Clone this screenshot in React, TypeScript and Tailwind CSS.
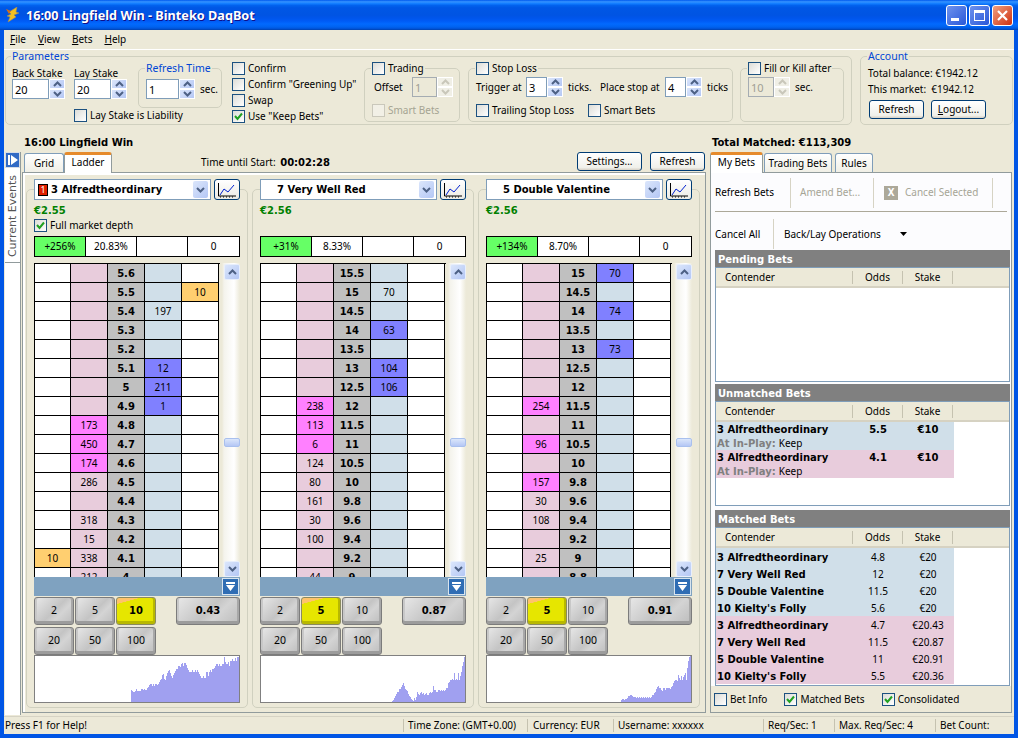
import React from "react";

type Row = { price: string; lay?: string; layHot?: boolean; back?: string; backHot?: boolean; left?: string; right?: string };

const FRAME_BLUE = "bg-[#0055e5]";
const BOLD = "font-['DejaVu_Sans'] font-bold text-[10px]";

const LADDER_A: Row[] = [
  { price: "5.6" },
  { price: "5.5", right: "10" },
  { price: "5.4", back: "197" },
  { price: "5.3" },
  { price: "5.2" },
  { price: "5.1", back: "12", backHot: true },
  { price: "5", back: "211", backHot: true },
  { price: "4.9", back: "1", backHot: true },
  { price: "4.8", lay: "173", layHot: true },
  { price: "4.7", lay: "450", layHot: true },
  { price: "4.6", lay: "174", layHot: true },
  { price: "4.5", lay: "286" },
  { price: "4.4" },
  { price: "4.3", lay: "318" },
  { price: "4.2", lay: "15" },
  { price: "4.1", lay: "338", left: "10" },
  { price: "4", lay: "212" },
];

const LADDER_B: Row[] = [
  { price: "15.5" },
  { price: "15", back: "70" },
  { price: "14.5" },
  { price: "14", back: "63", backHot: true },
  { price: "13.5" },
  { price: "13", back: "104", backHot: true },
  { price: "12.5", back: "106", backHot: true },
  { price: "12", lay: "238", layHot: true },
  { price: "11.5", lay: "113", layHot: true },
  { price: "11", lay: "6", layHot: true },
  { price: "10.5", lay: "124" },
  { price: "10", lay: "80" },
  { price: "9.8", lay: "161" },
  { price: "9.6", lay: "30" },
  { price: "9.4", lay: "100" },
  { price: "9.2" },
  { price: "9", lay: "44" },
];

const LADDER_C: Row[] = [
  { price: "15", back: "70", backHot: true },
  { price: "14.5" },
  { price: "14", back: "74", backHot: true },
  { price: "13.5" },
  { price: "13", back: "73", backHot: true },
  { price: "12.5" },
  { price: "12" },
  { price: "11.5", lay: "254", layHot: true },
  { price: "11" },
  { price: "10.5", lay: "96", layHot: true },
  { price: "10" },
  { price: "9.8", lay: "157", layHot: true },
  { price: "9.6", lay: "30" },
  { price: "9.4", lay: "108" },
  { price: "9.2" },
  { price: "9", lay: "25" },
  { price: "8.8" },
];

const CHART_A = [19,17,14,13,12,8,4,2,3,5,6,6,7,8,9,11,12,11,10,10,11,13,11,11,11,11,13,13,12,13,12,12,14,15,17,18,18,16,18,16,18,18,17,18,20,22,23,27,28,23,22,26,29,31,32,29,26,24,27,29,31,33,33,36,36,35,38,39,36,39,39,37,34,32,30,30,30,32,30,30,32,30,32,30,28,26,24,24,26,24,24,30,30,26,30,32,30,33,33,34,36,38,38,36,38,36,36,38,38,45,40,38,38,40,36,41,41,43,41,41,44,41,45,45].slice(-108);
const CHART_B = [1,2,4,6,8,10,10,13,13,15,17,19,16,13,12,11,8,6,5,3,2,1,4,2,5,10,8,7,9,10,8,9,7,8,9,7,7,9,10,9,10,16,12,12,10,10,12,12,11,12,11,12,11,12,14,14,19,20,22,22,23,22,29,22,23,22,29,22,26,30,36,40,45];
const CHART_C = [2,3,3,2,3,3,4,6,6,7,7,6,5,5,5,4,5,4,5,4,5,4,5,4,5,4,5,4,5,4,5,7,7,9,10,13,15,16,14,14,12,11,14,14,12,14,14,14,14,13,15,16,19,21,22,22,21,27,24,22,26,22,25,27,29,22,34,41,45,46];

function Arrow({ up, disabled }: { up?: boolean; disabled?: boolean }) {
  return (
    <svg width="9" height="6" viewBox="0 0 9 6" aria-hidden="true">
      <path d={up ? "M1 5L4.5 1.5 8 5" : "M1 1L4.5 4.5 8 1"} fill="none" stroke={disabled ? "#c9c7ba" : "#4d6185"} strokeWidth="2" />
    </svg>
  );
}

function Spin({ value, w, disabled }: { value: string; w: string; disabled?: boolean }) {
  const btn = disabled
    ? "h-[10px] flex items-center justify-center bg-[#f0efe6] border border-white"
    : "h-[10px] flex items-center justify-center bg-[linear-gradient(135deg,#dbe6fb,#b4c7f5)] border border-white";
  return (
    <div className="flex h-[20px]">
      <div className={`${w} h-[20px] flex items-center pl-[2px] text-[11px] border ${disabled ? "border-[#a5acb2] bg-[#ece9d8] text-[#a09f94]" : "border-[#7f9db9] bg-white"}`}>{value}</div>
      <div className="w-[16px]">
        <div className={btn}><Arrow up disabled={disabled} /></div>
        <div className={btn}><Arrow disabled={disabled} /></div>
      </div>
    </div>
  );
}

function Check({ checked, disabled, label }: { checked?: boolean; disabled?: boolean; label?: string }) {
  return (
    <div className={`flex items-center gap-[3px] whitespace-nowrap ${disabled ? "text-[#a5a493]" : ""}`}>
      <div className={`w-[13px] h-[13px] shrink-0 flex items-center justify-center border ${disabled ? "border-[#cac8bb] bg-[#f2f0e6]" : "border-[#1c5180] bg-[linear-gradient(135deg,#dcdcd7,#ffffff)]"}`}>
        {checked && (
          <svg width="9" height="9" viewBox="0 0 9 9" aria-hidden="true">
            <path d="M1 4L3.5 7 8 1.5" fill="none" stroke="#21a121" strokeWidth="2" />
          </svg>
        )}
      </div>
      {label}
    </div>
  );
}

function XpButton({ label, w }: { label: React.ReactNode; w: string }) {
  return (
    <div className={`${w} h-[19px] flex items-center justify-center rounded-[3px] border border-[#003c74] bg-[linear-gradient(180deg,#ffffff,#f0f0ea_85%,#d6d0c5)]`}>{label}</div>
  );
}

function Group({ legend, w, h, children }: { legend: React.ReactNode; w: string; h: string; children: React.ReactNode }) {
  return (
    <fieldset className={`${w} ${h} shrink-0 border border-[#d0d0bf] rounded-[5px]`}>
      <legend className="ml-[6px] px-[1px] h-[12px] leading-[12px] flex items-center">{legend}</legend>
      {children}
    </fieldset>
  );
}

function Blue({ children }: { children: React.ReactNode }) {
  return <span className="text-[#0046d5] text-[10.5px]">{children}</span>;
}

function MiniChart({ data }: { data: number[] }) {
  const start = 205 - data.length;
  const d = data.map((h, i) => `M${start + i} 46V${46 - h}h1V46z`).join("");
  return (
    <div className="h-[48px] border border-[#808080] bg-white">
      <svg width="204" height="46" viewBox="0 0 204 46" shapeRendering="crispEdges" aria-hidden="true">
        <path d={d} fill="#a0a0f0" transform="translate(-1 0)" />
      </svg>
    </div>
  );
}

function GreyButton({ label, w, on, bold }: { label: string; w: string; on?: boolean; bold?: boolean }) {
  const tone = on
    ? "bg-[linear-gradient(165deg,#ffc36b_0,#ffc36b_16%,#e6e600_17%)] shadow-[inset_0_-3px_0_#b8b800,inset_-2px_0_0_#b8b800] border-[#8a8a60]"
    : "bg-[linear-gradient(135deg,#e8e8e8,#c4c4c4_50%,#d4d4d4_65%,#bcbcbc)] shadow-[inset_0_-3px_0_#9c9c9c,inset_-2px_0_0_#a8a8a8,inset_2px_0_0_#c8c8c8] border-[#7c7c7c]";
  return (
    <div className={`${w} h-[28px] pb-[2px] flex items-center justify-center rounded-[3px] border ${tone} ${on || bold ? BOLD : "text-[10.5px]"}`}>{label}</div>
  );
}

function Combo({ name, badge }: { name: string; badge?: boolean }) {
  return (
    <div className="w-[177px] h-[21px] flex items-center pl-[3px] pr-[2px] border border-[#7f9db9] bg-white">
      <div className="w-[13px] shrink-0">
        {badge && <div className="w-[10px] h-[12px] bg-[#e02000] border border-black text-white text-[9px] leading-[10px] text-center">1</div>}
      </div>
      <span className={`flex-1 ${BOLD}`}>{name}</span>
      <div className="w-[15px] h-[17px] flex items-center justify-center bg-[linear-gradient(135deg,#dbe6fb,#b4c7f5)] rounded-[2px]"><Arrow /></div>
    </div>
  );
}

function ChartButton() {
  return (
    <div className="w-[26px] h-[21px] flex items-center justify-center rounded-[3px] border border-[#003c74] bg-[linear-gradient(180deg,#ffffff,#ecebe4)]">
      <svg width="20" height="16" viewBox="0 0 20 16" aria-hidden="true">
        <path d="M1.5 1V14H19" fill="none" stroke="#000" />
        <path d="M3 13L7 7 11 10 17 3" fill="none" stroke="#0020d0" strokeWidth="1" />
        <path d="M3 15h1M6 15h1M9 15h1M12 15h1M15 15h1" stroke="#000" />
      </svg>
    </div>
  );
}

function Ladder({ rows }: { rows: Row[] }) {
  const cell = "h-[19px] border-r border-b border-black flex items-center justify-center";
  return (
    <div className="flex h-[314px]">
      <div className="w-[186px] h-[314px] overflow-hidden border-t border-l border-black">
        {rows.map((r) => (
          <div key={r.price} className="grid grid-cols-[36px_37px_37px_37px_37px]">
            <div className={`${cell} ${r.left ? "bg-[#ffcf70]" : "bg-white"}`}>{r.left}</div>
            <div className={`${cell} ${r.layHot ? "bg-[#ff80ff]" : "bg-[#e8ccdc]"}`}>{r.lay}</div>
            <div className={`${cell} bg-[#c0c0c0] ${BOLD}`}>{r.price}</div>
            <div className={`${cell} ${r.backHot ? "bg-[#8080ff]" : "bg-[#d0dfe9]"}`}>{r.back}</div>
            <div className={`${cell} ${r.right ? "bg-[#ffcf70]" : "bg-white"}`}>{r.right}</div>
          </div>
        ))}
      </div>
      <div className="w-[20px] ml-auto pl-[4px] flex flex-col pt-[1px] bg-[linear-gradient(90deg,#ece9d8_0,#ece9d8_10%,#f4f3ec_20%,#ffffff_70%,#ece9d8_100%)]">
        <div className="h-[16px] flex items-center justify-center rounded-[2px] bg-[linear-gradient(135deg,#dbe6fb,#b4c7f5)] border border-[#e8effc]"><Arrow up /></div>
        <div className="h-[9px] mt-[158px] rounded-[2px] bg-[linear-gradient(180deg,#dbe6fb,#b4c7f5)] border border-[#a9c0ee]" />
        <div className="h-[16px] mt-auto flex items-center justify-center rounded-[2px] bg-[linear-gradient(135deg,#dbe6fb,#b4c7f5)] border border-[#e8effc]"><Arrow /></div>
      </div>
    </div>
  );
}

function RunnerPanel(props: {
  name: string;
  badge?: boolean;
  profit: string;
  depth?: boolean;
  pct: string;
  book: string;
  rows: Row[];
  stake: string;
  amount: string;
  chart: number[];
}) {
  return (
    <fieldset className="w-[222px] h-[529px] shrink-0 border border-[#d0d0bf] rounded-[5px] px-[7px]">
      <legend className="flex gap-[3px]">
        <Combo name={props.name} badge={props.badge} />
        <ChartButton />
      </legend>
      <div className={`h-[18px] pt-[2px] flex items-center text-[#008000] ${BOLD}`}>{props.profit}</div>
      <div className="h-[15px] flex items-center">{props.depth && <Check checked label="Full market depth" />}</div>
      <div className="mt-[3px] h-[21px] grid grid-cols-4 border border-black bg-white">
        <div className="flex items-center justify-center bg-[#66ff66] border-r border-black">{props.pct}</div>
        <div className="flex items-center justify-center border-r border-black">{props.book}</div>
        <div className="border-r border-black" />
        <div className="flex items-center justify-center">0</div>
      </div>
      <div className="mt-[6px]"><Ladder rows={props.rows} /></div>
      <div className="h-[19px] bg-[#7fa2c0] flex justify-end items-center pr-px">
        <div className="w-[17px] h-[17px] border border-[#d8e4ee] bg-[#2f6db4] flex items-center justify-center">
          <svg width="11" height="11" viewBox="0 0 11 11" aria-hidden="true">
            <path d="M1 1h9v2H1zM1 4h9L5.5 10z" fill="#ffffff" />
          </svg>
        </div>
      </div>
      <div className="mt-[1px] flex gap-px items-start">
        {["2", "5", "10"].map((s) => (
          <GreyButton key={s} label={s} w="w-[40px]" on={s === props.stake} />
        ))}
        <div className="ml-auto"><GreyButton label={props.amount} w="w-[64px]" bold /></div>
      </div>
      <div className="mt-[2px] mb-0 flex gap-px">
        {["20", "50", "100"].map((s) => (
          <GreyButton key={s} label={s} w="w-[40px]" />
        ))}
      </div>
      <MiniChart data={props.chart} />
    </fieldset>
  );
}

function Tab({ label, active, w }: { label: string; active?: boolean; w: string }) {
  return active ? (
    <div className={`${w} h-[21px] pb-[3px] -mb-px z-10 flex items-center justify-center bg-white border border-b-0 border-[#919b9c] border-t-[3px] border-t-[#e68b2c] rounded-t-[3px]`}>{label}</div>
  ) : (
    <div className={`${w} h-[19px] pt-[1px] flex items-center justify-center bg-[linear-gradient(180deg,#ffffff,#f0efe6)] border border-b-0 border-[#7f9db9] rounded-t-[3px]`}>{label}</div>
  );
}

function BetsHead() {
  return (
    <div className="h-[20px] pt-[1px] flex items-center bg-[#ece9d8] border-b-2 border-[#d6d2c2]">
      <div className="w-[137px] pl-[9px] border-r border-[#c5c2b0] h-[13px] flex items-center">Contender</div>
      <div className="w-[50px] text-center border-r border-[#c5c2b0] h-[13px] flex items-center justify-center">Odds</div>
      <div className="w-[50px] text-center border-r border-[#c5c2b0] h-[13px] flex items-center justify-center">Stake</div>
    </div>
  );
}

function BetsSection({ title, h, children }: { title: string; h: string; children?: React.ReactNode }) {
  return (
    <div>
      <div className={`h-[17px] pt-px flex items-center px-[3px] bg-[#808080] text-white ${BOLD}`}>{title}</div>
      <div className={`${h} border border-[#7f9db9] bg-white`}>
        <BetsHead />
        {children}
      </div>
    </div>
  );
}

function OpenBet({ odds, tone }: { odds: string; tone: string }) {
  return (
    <div className={`w-[238px] h-[28px] ${tone}`}>
      <div className={`h-[14px] flex items-center ${BOLD}`}>
        <span className="w-[137px] pl-px">3 Alfredtheordinary</span>
        <span className="w-[50px] text-center">{odds}</span>
        <span className="w-[50px] text-center">€10</span>
      </div>
      <div className="h-[14px] flex items-center pl-px">
        <span className={`text-[#808080] mr-[3px] ${BOLD}`}>At In-Play:</span>Keep
      </div>
    </div>
  );
}

function MatchedBet({ name, odds, stake, tone }: { name: string; odds: string; stake: string; tone: string }) {
  return (
    <div className={`w-[238px] h-[17px] pt-[2px] flex items-center ${tone}`}>
      <span className={`w-[137px] pl-px ${BOLD}`}>{name}</span>
      <span className="w-[50px] text-center">{odds}</span>
      <span className="w-[50px] text-center">{stake}</span>
    </div>
  );
}

const BLUE_ROW = "bg-[#d0dfe9]";
const PINK_ROW = "bg-[#e8ccdc]";

export default function App() {
  return (
    <div className={`w-[1018px] h-[738px] overflow-hidden flex flex-col ${FRAME_BLUE} text-black font-['Noto_Sans',sans-serif] text-[10px] leading-[13px]`}>
      {/* title bar */}
      <div className="h-[30px] shrink-0 flex items-center pl-[6px] pr-[5px] bg-[linear-gradient(180deg,#0058ee_0%,#3593ff_6%,#127dff_12%,#0262ee_18%,#0057e5_26%,#0054e3_50%,#0055eb_60%,#005bf5_70%,#026afe_80%,#0062ef_90%,#0052d6_96%,#0040ab_100%)]">
        <svg width="16" height="16" viewBox="0 0 16 16" aria-hidden="true">
          <path d="M11 0L3 5l2 2-4 2 3 1-2 5 8-5-2-2 5-2-3-1z" fill="#f4c020" stroke="#9a8a60" strokeWidth="0.6" />
          <path d="M0 2l5 2-2 3z" fill="#d87018" />
        </svg>
        <span className="ml-[4px] flex-1 text-white font-['Noto_Sans'] font-bold text-[12.7px] [text-shadow:1px_1px_0_#0f1089]">16:00 Lingfield Win - Binteko DaqBot</span>
        <div className="flex gap-[2px]">
          <div className="w-[21px] h-[21px] flex items-end justify-center pb-[4px] rounded-[3px] border border-white bg-[linear-gradient(135deg,#6e92ee,#2a58d8)]">
            <div className="w-[8px] h-[3px] bg-white ml-[-3px]" />
          </div>
          <div className="w-[21px] h-[21px] flex items-center justify-center rounded-[3px] border border-white bg-[linear-gradient(135deg,#6e92ee,#2a58d8)]">
            <div className="w-[11px] h-[11px] border border-white border-t-[3px]" />
          </div>
          <div className="w-[21px] h-[21px] flex items-center justify-center rounded-[3px] border border-white bg-[linear-gradient(135deg,#f0a080,#d03010)]">
            <svg width="13" height="13" viewBox="0 0 13 13" aria-hidden="true">
              <path d="M2 2l9 9M11 2l-9 9" stroke="#ffffff" strokeWidth="2.2" />
            </svg>
          </div>
        </div>
      </div>

      <div className="flex-1 mx-[4px] mb-[4px] bg-[#ece9d8] flex flex-col min-h-0">
        {/* menu */}
        <div className="h-[20px] shrink-0 flex items-center gap-[12px] pl-[6px] pb-[1px] border-b border-white">
          <span><u>F</u>ile</span>
          <span><u>V</u>iew</span>
          <span><u>B</u>ets</span>
          <span><u>H</u>elp</span>
        </div>

        {/* parameters and account */}
        <div className="h-[82px] shrink-0 flex gap-[8px] pl-px">
          <fieldset className="w-[847px] h-[75px] mt-0 border border-[#d0d0bf] rounded-[5px] pl-[6px]">
            <legend className="-ml-px px-[1px] h-[12px] leading-[12px]"><Blue>Parameters</Blue></legend>
            <div className="flex">
              <div className="w-[126px] shrink-0 pt-[4px]">
                <div className="flex">
                  <div className="w-[62px]">
                    <div className="h-[13px] leading-[14px]">Back Stake</div>
                    <Spin value="20" w="w-[37px]" />
                  </div>
                  <div className="w-[64px]">
                    <div className="h-[13px] leading-[14px]">Lay Stake</div>
                    <Spin value="20" w="w-[37px]" />
                  </div>
                </div>
                <div className="pl-[62px] mt-[10px]"><Check label="Lay Stake is Liability" /></div>
              </div>

              <Group legend={<Blue>Refresh Time</Blue>} w="w-[84px]" h="h-[46px]">
                <div className="flex items-center gap-[5px] pl-[7px] pt-[5px]">
                  <Spin value="1" w="w-[33px]" />
                  sec.
                </div>
              </Group>

              <div className="w-[132px] ml-[10px] shrink-0 -mt-[2px] pr-0">
                <div className="h-[16px] flex items-center"><Check label="Confirm" /></div>
                <div className="h-[16px] flex items-center"><Check label={'Confirm "Greening Up"'} /></div>
                <div className="h-[16px] flex items-center"><Check label="Swap" /></div>
                <div className="h-[16px] flex items-center"><Check checked label={'Use "Keep Bets"'} /></div>
              </div>

              <Group legend={<Check label="Trading" />} w="w-[96px]" h="h-[60px]">
                <div className="flex items-center pl-[9px] pt-[3px]">
                  <span className="w-[38px]">Offset</span>
                  <Spin value="1" w="w-[25px]" disabled />
                </div>
                <div className="pl-[7px] mt-[7px]"><Check disabled label="Smart Bets" /></div>
              </Group>

              <div className="ml-[8px]">
                <Group legend={<Check label="Stop Loss" />} w="w-[265px]" h="h-[60px]">
                  <div className="flex items-center pl-[7px] pt-[3px] whitespace-nowrap">
                    <span className="w-[50px]">Trigger at</span>
                    <Spin value="3" w="w-[21px]" />
                    <span className="ml-[5px] w-[32px]">ticks.</span>
                    <span className="w-[65px]">Place stop at</span>
                    <Spin value="4" w="w-[21px]" />
                    <span className="ml-[5px]">ticks</span>
                  </div>
                  <div className="flex pl-[7px] mt-[7px]">
                    <div className="w-[112px]"><Check label="Trailing Stop Loss" /></div>
                    <Check label="Smart Bets" />
                  </div>
                </Group>
              </div>

              <div className="ml-[7px]">
                <Group legend={<Check label="Fill or Kill after" />} w="w-[104px]" h="h-[60px]">
                  <div className="flex items-center gap-[5px] pl-[7px] pt-[3px]">
                    <Spin value="10" w="w-[26px]" disabled />
                    sec.
                  </div>
                </Group>
              </div>
            </div>
          </fieldset>

          <fieldset className="w-[153px] h-[75px] border border-[#d0d0bf] rounded-[5px] pl-[7px]">
            <legend className="-ml-px px-[1px] h-[12px] leading-[12px]"><Blue>Account</Blue></legend>
            <div className="h-[16px] mt-[3px] flex items-center">Total balance: €1942.12</div>
            <div className="h-[16px] flex items-center">This market:&nbsp; €1942.12</div>
            <div className="flex gap-[7px] mt-[3px] pl-px">
              <XpButton label="Refresh" w="w-[55px]" />
              <XpButton label={<span><u>L</u>ogout...</span>} w="w-[55px]" />
            </div>
          </fieldset>
        </div>

        {/* market heading */}
        <div className={`h-[19px] pt-px shrink-0 flex items-center ${BOLD}`}>
          <span className="ml-[20px] w-[688px]">16:00 Lingfield Win</span>
          <span>Total Matched: €113,309</span>
        </div>

        <div className="flex-1 min-h-0 flex">
          {/* rail */}
          <div className="w-[18px] shrink-0 pl-px">
            <div className="w-[16px] h-[563px] bg-white border-r border-[#919b9c]">
              <div className="h-[16px] mt-px border border-[#d6dce6] bg-[#316ac5] flex items-center justify-center">
                <svg width="12" height="12" viewBox="0 0 12 12" aria-hidden="true">
                  <path d="M1 1h2v10H1zM4 1l7 5-7 5z" fill="#ffffff" />
                </svg>
              </div>
              <div className="h-[92px] mt-[3px] flex items-center justify-center text-[#555555] border-b border-[#919b9c]">
                <span className="[writing-mode:vertical-rl] rotate-180 font-['DejaVu_Sans'] font-medium text-[11px] whitespace-nowrap">Current Events</span>
              </div>
            </div>
          </div>

          {/* ladder tabs */}
          <div className="w-[684px] shrink-0 flex flex-col">
            <div className="h-[21px] shrink-0 flex items-end pl-[2px] relative">
              <Tab label="Grid" w="w-[40px]" />
              <Tab label="Ladder" w="w-[48px]" active />
              <span className="ml-[89px] self-center pt-[2px] w-[376px]">
                Time until Start: <span className={`ml-[2px] ${BOLD}`}>00:02:28</span>
              </span>
              <div className="flex gap-[8px] self-start pt-px">
                <XpButton label="Settings..." w="w-[65px]" />
                <XpButton label="Refresh" w="w-[55px]" />
              </div>
            </div>
            <div className="h-[541px] border border-[#919b9c] pl-[3px] pt-[6px] flex gap-[4px] shadow-[inset_2px_2px_0_#ffffff]">
              <RunnerPanel name="3 Alfredtheordinary" badge profit="€2.55" depth pct="+256%" book="20.83%" rows={LADDER_A} stake="10" amount="0.43" chart={CHART_A} />
              <RunnerPanel name="7 Very Well Red" profit="€2.56" pct="+31%" book="8.33%" rows={LADDER_B} stake="5" amount="0.87" chart={CHART_B} />
              <RunnerPanel name="5 Double Valentine" profit="€2.56" pct="+134%" book="8.70%" rows={LADDER_C} stake="5" amount="0.91" chart={CHART_C} />
            </div>
          </div>

          {/* bets tabs */}
          <div className="w-[302px] ml-[4px] shrink-0 flex flex-col">
            <div className="h-[21px] shrink-0 flex items-end gap-px">
              <Tab label="My Bets" w="w-[53px]" active />
              <Tab label="Trading Bets" w="w-[68px]" />
              <div className="w-px" />
              <Tab label="Rules" w="w-[38px]" />
            </div>
            <div className="h-[541px] border border-[#919b9c] bg-[#fcfcfe] flex flex-col">
              <div className="h-[39px] mx-[4px] flex items-center border-b border-[#aca899] pt-[1px]">
                <span className="w-[75px]">Refresh Bets</span>
                <div className="h-[30px] w-px bg-[#d6d3c4]" />
                <span className="w-[82px] pl-[9px] text-[#a6a596]">Amend Bet...</span>
                <div className="h-[30px] w-px bg-[#d6d3c4]" />
                <div className="w-[118px] flex items-center pl-[10px] text-[#a6a596]">
                  <div className="w-[14px] h-[14px] mr-[7px] bg-[#aca899] flex items-center justify-center text-white font-bold text-[10px]">X</div>
                  Cancel Selected
                </div>
                <div className="h-[30px] w-px bg-[#d6d3c4]" />
              </div>
              <div className="h-[38px] mx-[4px] pt-[6px] flex items-center">
                <span className="w-[58px]">Cancel All</span>
                <div className="h-[30px] w-px bg-[#d6d3c4]" />
                <span className="ml-[10px] w-[116px]">Back/Lay Operations</span>
                <svg width="7" height="4" viewBox="0 0 7 4" aria-hidden="true"><path d="M0 0h7L3.5 4z" fill="#000" /></svg>
              </div>
              <div className="pl-[4px] pr-px flex flex-col gap-[2px]">
                <BetsSection title="Pending Bets" h="h-[115px]" />
                <BetsSection title="Unmatched Bets" h="h-[105px]">
                  <OpenBet odds="5.5" tone={BLUE_ROW} />
                  <OpenBet odds="4.1" tone={PINK_ROW} />
                </BetsSection>
                <div className="mt-[2px]">
                  <BetsSection title="Matched Bets" h="h-[159px]">
                    <MatchedBet name="3 Alfredtheordinary" odds="4.8" stake="€20" tone={BLUE_ROW} />
                    <MatchedBet name="7 Very Well Red" odds="12" stake="€20" tone={BLUE_ROW} />
                    <MatchedBet name="5 Double Valentine" odds="11.5" stake="€20" tone={BLUE_ROW} />
                    <MatchedBet name="10 Kielty's Folly" odds="5.6" stake="€20" tone={BLUE_ROW} />
                    <MatchedBet name="3 Alfredtheordinary" odds="4.7" stake="€20.43" tone={PINK_ROW} />
                    <MatchedBet name="7 Very Well Red" odds="11.5" stake="€20.87" tone={PINK_ROW} />
                    <MatchedBet name="5 Double Valentine" odds="11" stake="€20.91" tone={PINK_ROW} />
                    <MatchedBet name="10 Kielty's Folly" odds="5.5" stake="€20.36" tone={PINK_ROW} />
                  </BetsSection>
                </div>
              </div>
              <div className="flex-1 flex items-center gap-[17px] pl-[3px] bg-[#ece9d8]">
                <Check label="Bet Info" />
                <Check checked label="Matched Bets" />
                <Check checked label="Consolidated" />
              </div>
            </div>
          </div>
        </div>

        {/* status bar */}
        <div className="h-[18px] mt-[2px] shrink-0 flex items-center border-t border-[#d6d3c4] whitespace-nowrap">
          <span className="w-[399px] pl-[1px]">Press F1 for Help!</span>
          <span className="w-[124px] pl-[4px] border-l border-[#c5c2b0]">Time Zone: (GMT+0.00)</span>
          <span className="w-[86px] pl-[5px] border-l border-[#c5c2b0]">Currency: EUR</span>
          <span className="w-[150px] pl-[4px] border-l border-[#c5c2b0]">Username: xxxxxx</span>
          <span className="w-[71px] pl-[4px] border-l border-[#c5c2b0]">Req/Sec: 1</span>
          <span className="w-[101px] pl-[4px] border-l border-[#c5c2b0]">Max. Req/Sec: 4</span>
          <span className="pl-[4px] border-l border-[#c5c2b0]">Bet Count:</span>
        </div>
      </div>
    </div>
  );
}
